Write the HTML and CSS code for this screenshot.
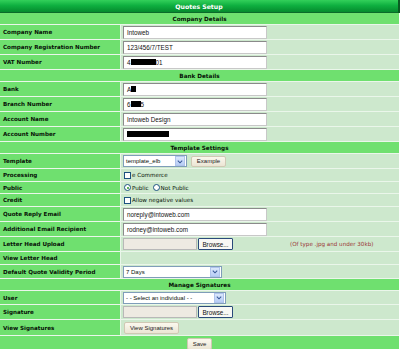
FILE: index.html
```html
<!DOCTYPE html>
<html>
<head>
<meta charset="utf-8">
<title>Quotes Setup</title>
<link rel="stylesheet" href="styles.css">
</head>
<body>
<table class="setup">
  <tr class="r-title"><th colspan="2" class="title">Quotes Setup</th></tr>
  <tr class="r-sec"><th colspan="2" class="section">Company Details</th></tr>
  <tr class="r-in"><td class="label">Company Name</td><td class="value"><span class="text">Intoweb</span></td></tr>
  <tr class="r-in"><td class="label">Company Registration Number</td><td class="value"><span class="text">123/456/7/TEST</span></td></tr>
  <tr class="r-in"><td class="label">VAT Number</td><td class="value"><span class="text">4<i class="redact r-vat"></i>01</span></td></tr>
  <tr class="r-sec"><th colspan="2" class="section">Bank Details</th></tr>
  <tr class="r-in"><td class="label">Bank</td><td class="value"><span class="text">A<i class="redact r-bank"></i></span></td></tr>
  <tr class="r-in"><td class="label">Branch Number</td><td class="value"><span class="text">6<i class="redact r-branch"></i>5</span></td></tr>
  <tr class="r-in"><td class="label">Account Name</td><td class="value"><span class="text">Intoweb Design</span></td></tr>
  <tr class="r-in"><td class="label">Account Number</td><td class="value"><span class="text"><i class="redact r-acc"></i></span></td></tr>
  <tr class="r-sec"><th colspan="2" class="section">Template Settings</th></tr>
  <tr class="r-in"><td class="label">Template</td><td class="value"><span class="inline"><span class="select s-tpl"><span class="sel-text">template_elb</span><span class="arrow"><svg width="9" height="9" viewBox="0 0 9 9"><path d="M2 3.5 L4.5 6 L7 3.5" fill="none" stroke="#3a5a9a" stroke-width="1.2"/></svg></span></span><span class="btn b-example">Example</span></span></td></tr>
  <tr class="r-chk"><td class="label">Processing</td><td class="value"><span class="inline"><span class="checkbox"></span><span class="opt">e Commerce</span></span></td></tr>
  <tr class="r-rad"><td class="label">Public</td><td class="value"><span class="inline"><span class="radio on"></span><span class="opt">Public</span><span class="radio"></span><span class="opt">Not Public</span></span></td></tr>
  <tr class="r-chk"><td class="label">Credit</td><td class="value"><span class="inline"><span class="checkbox"></span><span class="opt">Allow negative values</span></span></td></tr>
  <tr class="r-in"><td class="label">Quote Reply Email</td><td class="value"><span class="text">noreply@intoweb.com</span></td></tr>
  <tr class="r-in"><td class="label">Additional Email Recipient</td><td class="value"><span class="text">rodney@intoweb.com</span></td></tr>
  <tr class="r-in"><td class="label">Letter Head Upload</td><td class="value"><span class="inline"><span class="file"></span><span class="browse">Browse...</span><span class="note">(Of type .jpg and under 30kb)</span></span></td></tr>
  <tr class="r-plain"><td class="label">View Letter Head</td><td class="value"></td></tr>
  <tr class="r-sel"><td class="label">Default Quote Validity Period</td><td class="value"><span class="select s-days"><span class="sel-text">7 Days</span><span class="arrow"><svg width="9" height="9" viewBox="0 0 9 9"><path d="M2 3.5 L4.5 6 L7 3.5" fill="none" stroke="#3a5a9a" stroke-width="1.2"/></svg></span></span></td></tr>
  <tr class="r-sec"><th colspan="2" class="section">Manage Signatures</th></tr>
  <tr class="r-sel"><td class="label">User</td><td class="value"><span class="select s-user"><span class="sel-text">- - Select an individual - -</span><span class="arrow"><svg width="9" height="9" viewBox="0 0 9 9"><path d="M2 3.5 L4.5 6 L7 3.5" fill="none" stroke="#3a5a9a" stroke-width="1.2"/></svg></span></span></td></tr>
  <tr class="r-in"><td class="label">Signature</td><td class="value"><span class="inline"><span class="file"></span><span class="browse">Browse...</span></span></td></tr>
  <tr class="r-btn"><td class="label">View Signatures</td><td class="value"><span class="btn b-view">View Signatures</span></td></tr>
  <tr class="r-save"><th colspan="2" class="section save-cell"><span class="btn b-save">Save</span></th></tr>
</table>
</body>
</html>
```

FILE: styles.css
```css
html, body {
  margin: 0;
  padding: 0;
  background: #ffffff;
}

.setup {
  width: 400px;
  border-collapse: collapse;
  font-family: "DejaVu Sans", Verdana, sans-serif;
  font-size: 6px;
  color: #071207;
}

.setup td, .setup th {
  padding: 0;
  border-bottom: 1px solid #eaf6ea;
  vertical-align: middle;
}

.title {
  height: 12px;
  background: linear-gradient(#33d05a, #0fb040 45%, #058a2d);
  color: #ffffff;
  font-weight: bold;
  font-size: 6.2px;
  text-align: center;
  border-bottom: 1px solid #0b6a2a !important;
  border-right: 2px solid #0a5a22;
}

.section {
  height: 11px;
  background: #6fe06f;
  font-weight: bold;
  text-align: center;
  font-size: 5.7px;
}

.label {
  width: 117px;
  padding-left: 3px !important;
  background: #6fe06f;
  font-weight: bold;
  font-size: 5.6px;
  border-right: 1px solid #eaf6ea;
  white-space: nowrap;
}

.value {
  background: #cde8cd;
  padding-left: 2px !important;
  font-size: 6px;
  font-family: "Liberation Sans", Arial, sans-serif;
}

.r-in td { height: 14px; }
.r-chk td { height: 12px; }
.r-rad td { height: 11px; }
.r-plain td { height: 12px; }
.r-sel td { height: 13px; }
.r-btn td { height: 15px; }
.r-save th { height: 14px; border-bottom: 0; }

.text {
  display: flex;
  align-items: center;
  box-sizing: border-box;
  width: 144px;
  height: 13px;
  padding-left: 3px;
  background: #ffffff;
  border: 1px solid #8a8a8a;
  border-right-color: #c8c8c8;
  border-bottom-color: #c8c8c8;
  font-family: "Liberation Sans", Arial, sans-serif;
  font-size: 6.3px;
  color: #111;
}

.redact {
  display: inline-block;
  height: 6px;
  background: #000;
}
.r-vat { width: 25px; }
.r-bank { width: 5px; }
.r-branch { width: 10px; }
.r-acc { width: 42px; }

.inline {
  display: flex;
  align-items: center;
}

.select {
  display: flex;
  align-items: center;
  justify-content: space-between;
  box-sizing: border-box;
  height: 12px;
  background: #fff;
  border: 1px solid #7f9db9;
  padding-left: 2px;
  font-size: 6px;
  font-family: "Liberation Sans", Arial, sans-serif;
}
.s-tpl { width: 64px; }
.s-days { width: 99px; }
.s-user { width: 103px; }

.arrow {
  display: flex;
  align-items: center;
  justify-content: center;
  width: 8px;
  height: 8px;
  margin-right: 1px;
  background: linear-gradient(#dce8fc, #b7cdf5);
  border: 0.5px solid #b0c4ec;
}

.btn {
  display: inline-flex;
  align-items: center;
  justify-content: center;
  box-sizing: border-box;
  height: 11px;
  background: linear-gradient(#fbf8ee, #ebe5d4);
  border: 1px solid #d0c8b4;
  border-radius: 2px;
  font-family: "Liberation Sans", Arial, sans-serif;
  font-size: 6px;
  font-weight: normal;
  color: #222;
}
.b-example { width: 35px; margin-left: 4px; }
.b-view { width: 55px; height: 12px; margin-left: 1px; }
.b-save { width: 25px; height: 12px; margin-top: 2px; }

.save-cell {
  vertical-align: top;
  padding-top: 1px;
}

.checkbox {
  box-sizing: border-box;
  width: 7px;
  height: 7px;
  margin-left: 1px;
  background: #fff;
  border: 1px solid #1c5180;
}

.radio {
  box-sizing: border-box;
  width: 7px;
  height: 7px;
  margin-left: 1px;
  border-radius: 50%;
  background: #fff;
  border: 1px solid #1c5180;
  position: relative;
}
.radio.on::after {
  content: "";
  position: absolute;
  left: 1.5px;
  top: 1.5px;
  width: 2px;
  height: 2px;
  border-radius: 50%;
  background: #2a9a2a;
}

.opt {
  margin-left: 1px;
  margin-right: 3px;
  font-family: "DejaVu Sans", Verdana, sans-serif;
  font-size: 5.6px;
}

.file {
  box-sizing: border-box;
  width: 74px;
  height: 12px;
  background: #eeeae2;
  border: 1px solid #b8b8b8;
}

.browse {
  display: inline-flex;
  align-items: center;
  justify-content: center;
  box-sizing: border-box;
  width: 35px;
  height: 12px;
  margin-left: 1px;
  background: #f8f8f4;
  border: 1px solid #2a4a7a;
  border-radius: 1px;
  font-size: 6.3px;
  color: #111;
}

.note {
  margin-left: 57px;
  color: #993333;
  font-family: "DejaVu Sans", Verdana, sans-serif;
  font-size: 5.6px;
}
```
